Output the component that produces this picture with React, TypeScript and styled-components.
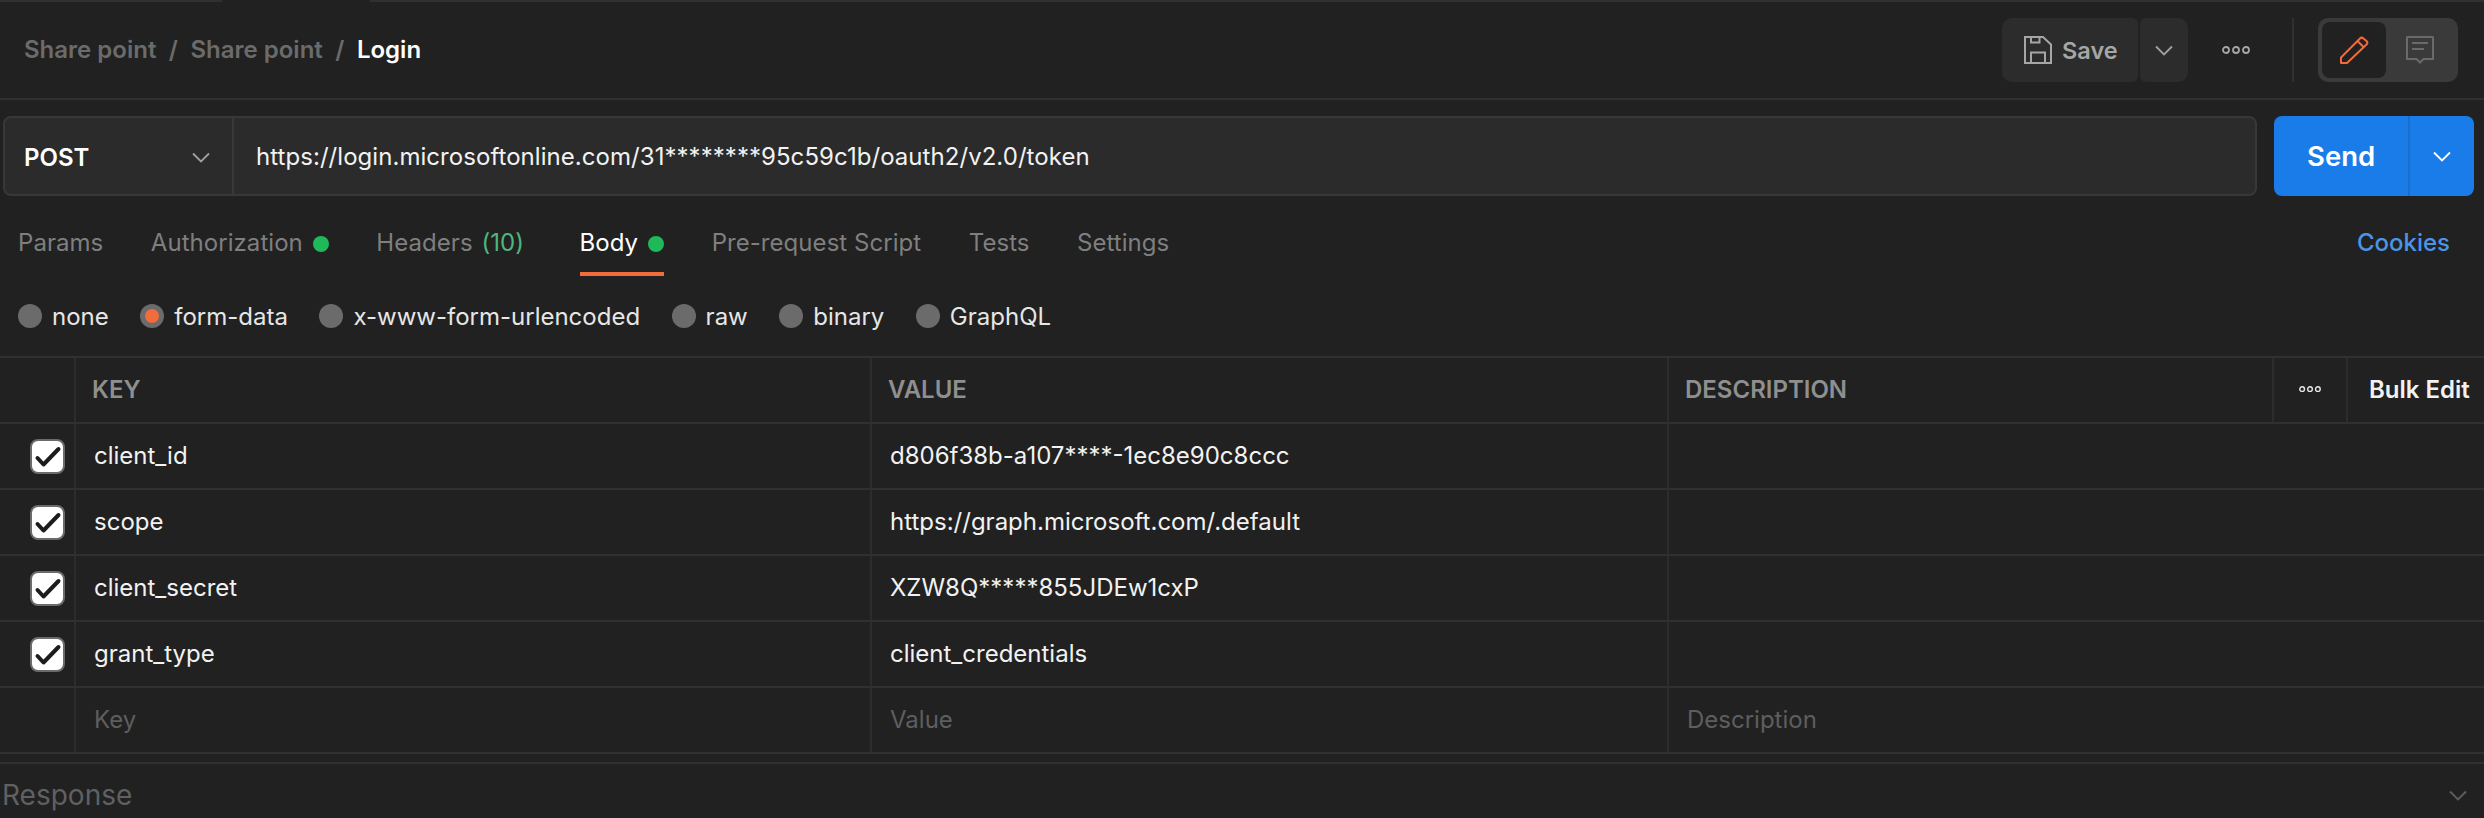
import React from "react";
import styled, { createGlobalStyle } from "styled-components";

const GlobalStyle = createGlobalStyle`
  html, body {
    margin: 0;
    padding: 0;
    background: #212121;
  }
  * {
    box-sizing: border-box;
  }
`;

const Page = styled.div`
  width: 2484px;
  height: 818px;
  overflow: hidden;
  display: flex;
  flex-direction: column;
  background: #212121;
  color: #fff;
  font-family: Inter, "Liberation Sans", sans-serif;
  font-size: 24px;
`;

const TopEdge = styled.div`
  height: 2px;
  display: grid;
  grid-template-columns: 222px 148px 1fr;
  background: #303030;
`;

const TopEdgeGap = styled.div`
  grid-column: 2;
  background: #212121;
`;

/* HEADER */
const Header = styled.header`
  height: 98px;
  flex: none;
  display: flex;
  align-items: center;
  justify-content: space-between;
  padding: 0 26px 0 24px;
  border-bottom: 2px solid #303030;
`;

const Crumbs = styled.div`
  display: flex;
  align-items: center;
  gap: 12.5px;
  font-size: 24px;
  font-weight: 600;
  color: #6b6b6b;
  padding-bottom: 2px;
`;

const CrumbCurrent = styled.span`
  color: #fff;
  font-weight: 600;
`;

const Actions = styled.div`
  display: flex;
  align-items: center;
`;

const SaveButton = styled.div`
  width: 136px;
  height: 64px;
  display: flex;
  align-items: center;
  gap: 10px;
  padding-left: 22px;
  background: #2c2c2c;
  border-radius: 10px 6px 6px 10px;
  color: #a6a6a6;
  font-size: 23.5px;
  font-weight: 600;
`;

const SaveCaret = styled.div`
  width: 48px;
  height: 64px;
  margin-left: 2px;
  display: flex;
  align-items: center;
  justify-content: center;
  background: #2c2c2c;
  border-radius: 6px 10px 10px 6px;
`;

const MoreButton = styled.div`
  width: 62px;
  margin-left: 17px;
  display: flex;
  justify-content: center;
`;

const ActionDivider = styled.div`
  width: 2px;
  height: 64px;
  margin: 0 24px 0 25px;
  background: #303030;
`;

const ModeToggle = styled.div`
  width: 140px;
  height: 64px;
  padding: 4px;
  display: flex;
  align-items: center;
  background: #3a3a3a;
  border-radius: 10px;
`;

const ModeOption = styled.div<{ $active?: boolean }>`
  width: 64px;
  height: 56px;
  display: flex;
  align-items: center;
  justify-content: center;
  border-radius: 8px;
  background: ${(p) => (p.$active ? "#212121" : "transparent")};
  margin-right: ${(p) => (p.$active ? "2px" : "0")};
`;

/* URL BAR */
const RequestRow = styled.div`
  flex: none;
  height: 96px;
  padding: 16px 10px 0 3px;
  display: flex;
  gap: 17px;
`;

const UrlBox = styled.div`
  width: 2254px;
  height: 80px;
  display: flex;
  align-items: stretch;
  background: #2b2b2b;
  border: 2px solid #383838;
  border-radius: 8px;
`;

const MethodSelect = styled.div`
  width: 229px;
  display: flex;
  align-items: center;
  justify-content: space-between;
  padding: 2px 22px 0 19px;
  border-right: 2px solid #383838;
  font-weight: 600;
`;

const UrlText = styled.div`
  display: flex;
  align-items: center;
  padding-left: 22px;
  color: #f2f2f2;
  letter-spacing: 0.05px;
`;

const SendButton = styled.div`
  width: 200px;
  height: 80px;
  display: flex;
  background: #1a7ce8;
  border-radius: 8px;
  color: #fff;
  font-size: 27.5px;
  font-weight: 600;
`;

const SendLabel = styled.div`
  width: 136px;
  display: flex;
  align-items: center;
  padding-left: 33px;
  border-right: 2px solid #1b6fc9;
`;

const SendCaret = styled.div`
  flex: 1;
  display: flex;
  align-items: center;
  justify-content: center;
`;

/* TABS */
const TabRow = styled.nav`
  flex: none;
  height: 80px;
  display: flex;
  align-items: flex-end;
  gap: 47.5px;
  padding: 0 34px 0 18px;
`;

const Tab = styled.div<{ $active?: boolean }>`
  height: 58px;
  display: flex;
  align-items: flex-start;
  gap: 10px;
  padding-top: 11px;
  line-height: 28px;
  letter-spacing: 0.05px;
  color: ${(p) => (p.$active ? "#fff" : "#7f7f7f")};
  border-bottom: 4px solid ${(p) => (p.$active ? "#f26b3a" : "transparent")};
`;

const HeadersTab = styled(Tab)`
  margin-right: 8px;
`;

const StatusDot = styled.span`
  width: 16px;
  height: 16px;
  margin-top: 7px;
  border-radius: 50%;
  background: #1fb959;
`;

const TabCount = styled.span`
  margin-left: 2px;
  color: #4fb67d;
`;

const CookiesLink = styled.div`
  margin-left: auto;
  height: 58px;
  padding-top: 11px;
  line-height: 28px;
  color: #4a95e8;
  font-weight: 500;
`;

/* BODY TYPE */
const BodyTypes = styled.div`
  flex: none;
  height: 80px;
  display: flex;
  align-items: center;
  gap: 31.5px;
  padding-left: 18px;
  color: #e6e6e6;
`;

const BodyType = styled.label`
  display: flex;
  align-items: center;
  gap: 10px;
`;

const Radio = styled.span<{ $checked?: boolean }>`
  width: 24px;
  height: 24px;
  border-radius: 50%;
  display: flex;
  align-items: center;
  justify-content: center;
  background: #6b6b6b;

  &::after {
    content: "";
    width: 14px;
    height: 14px;
    border-radius: 50%;
    background: ${(p) => (p.$checked ? "#f26b3a" : "transparent")};
  }
`;

/* TABLE */
const Table = styled.div`
  flex: none;
  border-top: 2px solid #303030;
`;

const TableRow = styled.div<{ $header?: boolean }>`
  height: 66px;
  display: grid;
  grid-template-columns: ${(p) =>
    p.$header ? "76px 796px 797px 605px 74px 1fr" : "76px 796px 797px 1fr"};
  border-bottom: 2px solid #303030;
`;

const Cell = styled.div<{ $muted?: boolean }>`
  display: flex;
  align-items: center;
  padding: 0 0 2px 18px;
  border-right: 2px solid #2c2c2c;
  color: ${(p) => (p.$muted ? "#5e5e5e" : "#f2f2f2")};

  &:last-child {
    border-right: none;
  }
`;

const HeadCell = styled(Cell)`
  padding-left: 16px;
  color: #8f8f8f;
  font-weight: 600;
`;

const CheckCell = styled(Cell)`
  padding: 0 0 0 30px;
`;

const IconCell = styled(Cell)`
  padding-left: 0;
  justify-content: center;
`;

const BulkEdit = styled(Cell)`
  padding-left: 21px;
  font-weight: 600;
  color: #f2f2f2;
`;

const Checkbox = styled.span`
  width: 35px;
  height: 35px;
  display: flex;
  align-items: center;
  justify-content: center;
  background: #fff;
  border: 2px solid #6b6b6b;
  border-radius: 8px;
`;

/* RESPONSE */
const ResponseBar = styled.div`
  flex: none;
  margin-top: 8px;
  height: 54px;
  display: flex;
  align-items: center;
  justify-content: space-between;
  padding: 10px 17px 0 2px;
  border-top: 2px solid #303030;
  font-size: 28px;
  color: #606060;
`;

function Chevron({ color = "#a0a0a0", size = 18 }: { color?: string; size?: number }) {
  return (
    <svg width={size} height={(size * 11) / 18} viewBox="0 0 18 11" fill="none">
      <path d="M1 1.5l8 8 8-8" stroke={color} strokeWidth="1.8" />
    </svg>
  );
}

function Dots({ width = 28, color = "#a6a6a6" }: { width?: number; color?: string }) {
  return (
    <svg width={width} height={(width * 8) / 28} viewBox="0 0 28 8" fill="none">
      <circle cx="4" cy="4" r="3" stroke={color} strokeWidth="1.8" />
      <circle cx="14" cy="4" r="3" stroke={color} strokeWidth="1.8" />
      <circle cx="24" cy="4" r="3" stroke={color} strokeWidth="1.8" />
    </svg>
  );
}

function SaveIcon() {
  return (
    <svg width="28" height="28" viewBox="0 0 28 28" fill="none" stroke="#a6a6a6" strokeWidth="2">
      <path d="M1 1h18l8 7.5V27H1z" />
      <path d="M7 1v5.500h8.500V1" />
      <path d="M7 27V16.500h14V27" />
    </svg>
  );
}

function PencilIcon() {
  return (
    <svg width="29" height="28" viewBox="0 0 29 28" fill="none" stroke="#f26b3a" strokeWidth="2" strokeLinejoin="round">
      <path d="M1 27v-5.500L20 2.500a2.500 2.500 0 0 1 3.500 0L26.500 5a2.500 2.500 0 0 1 0 3.500L7 27z" />
      <path d="M17.500 5l6 6" />
    </svg>
  );
}

function CommentIcon() {
  return (
    <svg width="28" height="28" viewBox="0 0 28 28" fill="none" stroke="#6a6a6a" strokeWidth="2">
      <path d="M1.500 1h25l.5.5v21.500h-9.500L14 26.500 10.500 23H1V1.500z" />
      <path d="M6 7h16M6 13h12" />
    </svg>
  );
}

function CheckMark() {
  return (
    <svg width="31" height="31" viewBox="0 0 31 31" fill="none">
      <path
        d="M5.500 17l6 6.500L26.500 8"
        stroke="#1c1c1c"
        strokeWidth="4"
        strokeLinecap="round"
        strokeLinejoin="round"
      />
    </svg>
  );
}

const rows = [
  ["client_id", "d806f38b-a107****-1ec8e90c8ccc"],
  ["scope", "https://graph.microsoft.com/.default"],
  ["client_secret", "XZW8Q*****855JDEw1cxP"],
  ["grant_type", "client_credentials"],
];

const bodyTypes = ["none", "form-data", "x-www-form-urlencoded", "raw", "binary", "GraphQL"];

export default function App() {
  return (
    <Page>
      <GlobalStyle />
      <TopEdge>
        <TopEdgeGap />
      </TopEdge>

      <Header>
        <Crumbs>
          <span>Share point</span>
          <span>/</span>
          <span>Share point</span>
          <span>/</span>
          <CrumbCurrent>Login</CrumbCurrent>
        </Crumbs>
        <Actions>
          <SaveButton>
            <SaveIcon />
            Save
          </SaveButton>
          <SaveCaret>
            <Chevron />
          </SaveCaret>
          <MoreButton>
            <Dots />
          </MoreButton>
          <ActionDivider />
          <ModeToggle>
            <ModeOption $active>
              <PencilIcon />
            </ModeOption>
            <ModeOption>
              <CommentIcon />
            </ModeOption>
          </ModeToggle>
        </Actions>
      </Header>

      <RequestRow>
        <UrlBox>
          <MethodSelect>
            POST
            <Chevron />
          </MethodSelect>
          <UrlText>https://login.microsoftonline.com/31********95c59c1b/oauth2/v2.0/token</UrlText>
        </UrlBox>
        <SendButton>
          <SendLabel>Send</SendLabel>
          <SendCaret>
            <Chevron color="#fff" />
          </SendCaret>
        </SendButton>
      </RequestRow>

      <TabRow>
        <Tab>Params</Tab>
        <Tab>
          Authorization
          <StatusDot />
        </Tab>
        <HeadersTab>
          <span>
            Headers <TabCount>(10)</TabCount>
          </span>
        </HeadersTab>
        <Tab $active>
          Body
          <StatusDot />
        </Tab>
        <Tab>Pre-request Script</Tab>
        <Tab>Tests</Tab>
        <Tab>Settings</Tab>
        <CookiesLink>Cookies</CookiesLink>
      </TabRow>

      <BodyTypes>
        {bodyTypes.map((t) => (
          <BodyType key={t}>
            <Radio $checked={t === "form-data"} />
            {t}
          </BodyType>
        ))}
      </BodyTypes>

      <Table>
        <TableRow $header>
          <HeadCell />
          <HeadCell>KEY</HeadCell>
          <HeadCell>VALUE</HeadCell>
          <HeadCell>DESCRIPTION</HeadCell>
          <IconCell>
            <Dots width={22} color="#e6e6e6" />
          </IconCell>
          <BulkEdit>Bulk Edit</BulkEdit>
        </TableRow>
        {rows.map(([key, value]) => (
          <TableRow key={key}>
            <CheckCell>
              <Checkbox>
                <CheckMark />
              </Checkbox>
            </CheckCell>
            <Cell>{key}</Cell>
            <Cell>{value}</Cell>
            <Cell />
          </TableRow>
        ))}
        <TableRow>
          <Cell />
          <Cell $muted>Key</Cell>
          <Cell $muted>Value</Cell>
          <Cell $muted>Description</Cell>
        </TableRow>
      </Table>

      <ResponseBar>
        Response
        <Chevron color="#5e5e5e" />
      </ResponseBar>
    </Page>
  );
}
